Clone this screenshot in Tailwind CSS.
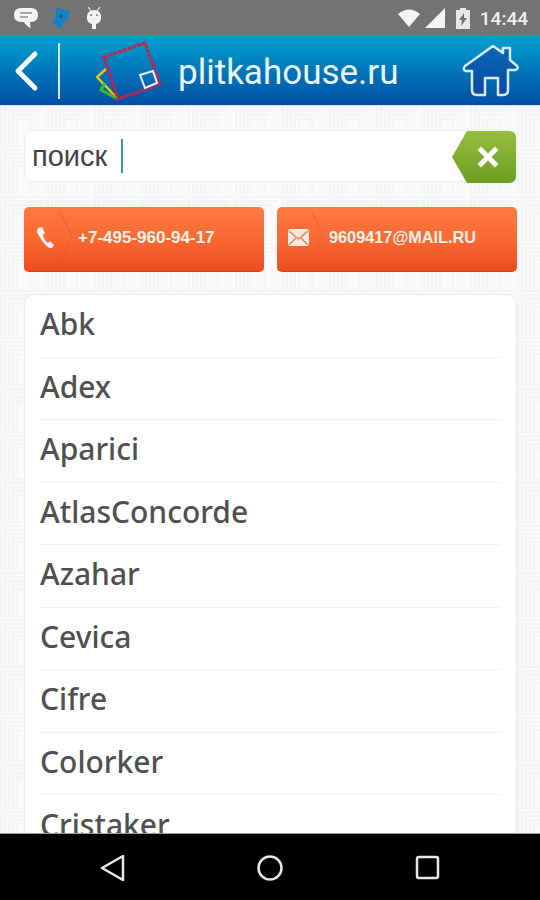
<!DOCTYPE html>
<html lang="en">
<head>
  <meta charset="UTF-8" />
  <title>plitkahouse.ru</title>
  <script src="https://cdn.jsdelivr.net/npm/@tailwindcss/browser@4"></script>
</head>
<body class="w-[540px] h-[900px] overflow-hidden flex flex-col font-['Roboto',sans-serif]">
  <!-- status bar -->
  <div class="h-[36px] shrink-0 bg-[#737373] flex items-center pl-[14px] pr-[12px] text-white">
    <svg class="w-[24px] h-[21px]" viewBox="0 0 24 21"><path d="M7 0h10q7 0 7 7t-7 7h-1q0 4 1 6-4-1-7-6H7q-7 0-7-7t7-7z" fill="#f4f4f4"/><path d="M6 5h12M6 9h8" stroke="#aaa" stroke-width="2"/></svg>
    <svg class="w-[18px] h-[21px] ml-[14px]" viewBox="0 0 18 21"><path d="M4 0l14 3-3 10-4 2-2 6-9-6 3-5z" fill="#1a80c4"/><path d="M7 6l4 1-2 4z" fill="#0b5a94"/></svg>
    <svg class="w-[18px] h-[23px] ml-[15px]" viewBox="0 0 18 23"><path d="M3 0l3 4M15 0l-3 4" stroke="#eee" stroke-width="1.2"/><path d="M2 9a7 6 0 0 1 14 0v3a7 6 0 0 1-5 5v5H7v-5a7 6 0 0 1-5-5z" fill="#f4f4f4"/><circle cx="6" cy="8" r="1" fill="#777"/><circle cx="12" cy="8" r="1" fill="#777"/></svg>
    <div class="flex-1"></div>
    <svg class="w-[22px] h-[18px]" viewBox="0 0 22 18"><path d="M0 5q11-9 22 0L11 18z" fill="#f4f4f4"/></svg>
    <svg class="w-[20px] h-[20px] ml-[5px]" viewBox="0 0 20 20"><path d="M0 20L20 0v20z" fill="#f4f4f4"/></svg>
    <svg class="w-[14px] h-[21px] ml-[11px]" viewBox="0 0 14 21"><path d="M4 0h6v2h4v19H0V2h4z" fill="#e8e8e8"/><path d="M8 5L3 12h3l-1 6 6-8H8z" fill="#737373"/></svg>
    <span class="ml-[10px] text-[19px] font-medium leading-none text-[#f0f0f0]">14:44</span>
  </div>

  <!-- header -->
  <div class="h-[70px] shrink-0 flex items-center bg-gradient-to-b from-[#02a0cf] to-[#024ea2] border-b-[1px] border-[#dbe6ee]">
    <svg class="w-[28px] h-[44px] ml-[13px]" viewBox="0 0 28 44"><path d="M22 5L5 22l17 17" fill="none" stroke="#f4fafd" stroke-width="5" stroke-linecap="round" stroke-linejoin="round"/></svg>
    <div class="w-[2px] h-[56px] bg-[#d5e8f4] ml-[17px]"></div>
    <svg class="w-[70px] h-[66px] ml-[36px] shrink-0" viewBox="0 0 70 66">
      <path d="M22 61L1 39l9-8" fill="none" stroke="#e8c22a" stroke-width="2.5"/>
      <path d="M22 61L5 52l4-7" fill="none" stroke="#3dbb2a" stroke-width="3"/>
      <path d="M8 19L49 5l15 41-42 15z" fill="none" stroke="#c81e50" stroke-width="3" stroke-dasharray="4 1"/>
      <path d="M44 37l13-4 4 12-12 5z" fill="none" stroke="#e6f2fa" stroke-width="2"/>
    </svg>
    <span class="ml-[12px] mt-[4px] text-[35px] leading-none text-[#eaf5fb]">plitkahouse.ru</span>
    <svg class="w-[60px] h-[54px] ml-[62px] shrink-0" viewBox="0 0 60 54">
      <defs><linearGradient id="h" x1="0" y1="0" x2="0" y2="1"><stop offset="0" stop-color="#0668b4"/><stop offset="1" stop-color="#0a4aa0"/></linearGradient></defs>
      <path d="M5 22L33 2l10 7V4h7v12l7 6q2 3-2 4h-7v20q0 5-5 5H38V34H25v17H17q-5 0-5-5V27H6q-4-1-1-5z" fill="url(#h)" stroke="#dbe9f5" stroke-width="2.5" stroke-linejoin="round"/>
    </svg>
  </div>

  <!-- content -->
  <div class="relative flex-1 min-h-0 bg-[#f9f9f9] pl-[24px] pr-[23px] pt-[24px] overflow-hidden">
    <svg class="absolute inset-0 w-full h-full" aria-hidden="true">
      <defs>
        <pattern id="tile" width="47" height="47" patternUnits="userSpaceOnUse" y="-4">
          <path d="M1 46V1h45M5 46V5h37M9 46V9h29M13 46V13h21M17 46V17h13v29" fill="none" stroke="#eeeeee" stroke-width="1"/>
        </pattern>
      </defs>
      <rect width="100%" height="100%" fill="url(#tile)"/>
    </svg>

    <div class="relative flex flex-col">
      <!-- search -->
      <div class="h-[52px] bg-white rounded-[10px] border border-[#eeeeee] flex items-center pl-[7px] relative">
        <span class="text-[29px] leading-none text-[#444444] font-['Liberation_Sans',sans-serif]">поиск</span>
        <span class="w-[2px] h-[34px] bg-[#26a69a] ml-[14px]"></span>
        <svg class="absolute right-0 top-0 w-[64px] h-[52px]" viewBox="0 0 64 52">
          <defs><linearGradient id="g" x1="0" y1="0" x2="0" y2="1"><stop offset="0" stop-color="#96bd3f"/><stop offset="1" stop-color="#6c9f22"/></linearGradient></defs>
          <path d="M0 26L15 0h42q7 0 7 7v38q0 7-7 7H15z" fill="url(#g)"/>
          <path d="M29 19l14 14M43 19L29 33" stroke="#fff" stroke-width="5" stroke-linecap="square"/>
        </svg>
      </div>

      <!-- contact buttons -->
      <div class="flex gap-[13px] mt-[25px]">
        <div class="w-[240px] h-[65px] rounded-[5px] border-b border-[#dd3f14] bg-gradient-to-b from-[#fd7b40] via-[#f96a33] to-[#ef4a1c] flex items-center pb-[3px] relative">
          <svg class="w-[18px] h-[22px] ml-[13px]" viewBox="0 0 18 22"><path d="M1 1l4-1 3 6-2 2q1 5 5 8l2-2 4 4-2 3q-4 1-9-6T0 5z" fill="#fbf1ec"/></svg>
          <svg class="absolute left-[35px] top-0 w-[14px] h-[64px]" viewBox="0 0 14 65"><path d="M0 3l13 28L0 60" fill="none" stroke="#d9562a" stroke-opacity=".5"/></svg>
          <span class="ml-[23px] text-[17px] font-bold leading-none text-[#fdf1e8] font-['Liberation_Sans',sans-serif]">+7-495-960-94-17</span>
        </div>
        <div class="w-[240px] h-[65px] rounded-[5px] border-b border-[#dd3f14] bg-gradient-to-b from-[#fd7b40] via-[#f96a33] to-[#ef4a1c] flex items-center pb-[3px] relative">
          <svg class="w-[21px] h-[17px] ml-[11px]" viewBox="0 0 21 17"><rect width="21" height="17" rx="2" fill="#fbe8e0"/><path d="M1 2l9.500 8 9.500-8M1 16l7-7M20 16l-7-7" fill="none" stroke="#f07a50" stroke-width="1.2"/></svg>
          <svg class="absolute left-[35px] top-0 w-[12px] h-[64px]" viewBox="0 0 12 65"><path d="M0 5l11 26L0 50" fill="none" stroke="#d9562a" stroke-opacity=".5"/></svg>
          <span class="ml-[20px] text-[16.300px] font-bold leading-none text-[#fdf1e8] font-['Liberation_Sans',sans-serif]">9609417@MAIL.RU</span>
        </div>
      </div>

      <!-- brand list -->
      <div class="mt-[22px] h-[600px] bg-white rounded-[10px] border border-[#e9e9e9] px-[15px] text-[#505050] text-[30px] font-medium font-['Noto_Sans',sans-serif]">
        <div class="h-[62.5px] flex items-center pb-[4px] border-b border-[#f1f1f1]">Abk</div>
        <div class="h-[62.5px] flex items-center pb-[4px] border-b border-[#f1f1f1]">Adex</div>
        <div class="h-[62.5px] flex items-center pb-[4px] border-b border-[#f1f1f1]">Aparici</div>
        <div class="h-[62.5px] flex items-center pb-[4px] border-b border-[#f1f1f1]">AtlasConcorde</div>
        <div class="h-[62.5px] flex items-center pb-[4px] border-b border-[#f1f1f1]">Azahar</div>
        <div class="h-[62.5px] flex items-center pb-[4px] border-b border-[#f1f1f1]">Cevica</div>
        <div class="h-[62.5px] flex items-center pb-[4px] border-b border-[#f1f1f1]">Cifre</div>
        <div class="h-[62.5px] flex items-center pb-[4px] border-b border-[#f1f1f1]">Colorker</div>
        <div class="h-[62.5px] flex items-center pb-[4px]">Cristaker</div>
      </div>
    </div>
  </div>

  <!-- nav bar -->
  <div class="h-[67px] shrink-0 bg-black border-t border-[#9a9a9a] flex items-center relative">
    <svg class="absolute left-[100px] top-[20px] w-[26px] h-[28px]" viewBox="0 0 26 28"><path d="M23 2v24L2 14z" fill="none" stroke="#e8e8e8" stroke-width="2.5" stroke-linejoin="round"/></svg>
    <svg class="absolute left-[256px] top-[20px] w-[28px] h-[28px]" viewBox="0 0 28 28"><circle cx="14" cy="14" r="11.500" fill="none" stroke="#e8e8e8" stroke-width="2.5"/></svg>
    <svg class="absolute left-[414px] top-[20px] w-[28px] h-[28px]" viewBox="0 0 28 28"><rect x="3" y="3" width="21" height="21" rx="2" fill="none" stroke="#e8e8e8" stroke-width="2.5"/></svg>
  </div>
</body>
</html>
